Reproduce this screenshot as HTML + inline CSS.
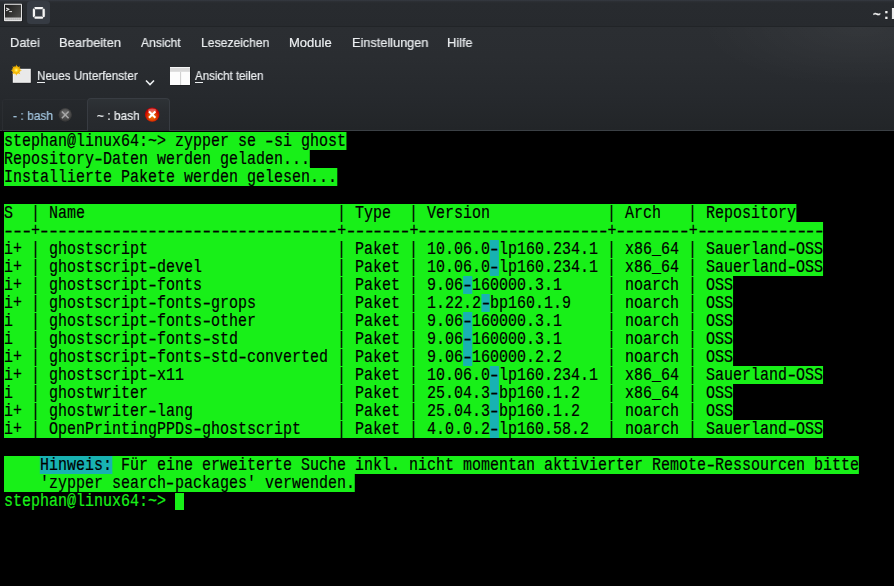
<!DOCTYPE html>
<html><head><meta charset="utf-8">
<style>
html,body{margin:0;padding:0;}
body{width:894px;height:586px;overflow:hidden;position:relative;background:#000;font-family:"Liberation Sans",sans-serif;}
.abs{position:absolute;}
#title{left:0;top:0;width:894px;height:26px;background:linear-gradient(#363a42 0px,#2c2f34 1.5px,#282b2f 3px,#272a2e 26px);}
#tline{left:0;top:26px;width:894px;height:1px;background:#212427;}
#menu{left:0;top:27px;width:894px;height:103px;background:radial-gradient(ellipse 160px 60px at 860px 0px,rgba(255,255,255,0.045),rgba(255,255,255,0) 100%),linear-gradient(#2b2e32 0px,#2a2d31 30px,#26292d 70px,#222528 103px);}
#bline{left:0;top:130px;width:894px;height:1px;background:#3b4045;}
.m{position:absolute;transform-origin:0 0;top:35px;font-size:13px;color:#eceff1;white-space:nowrap;line-height:15px;}
.tb{position:absolute;transform-origin:0 0;top:68px;font-size:13px;color:#eceff1;white-space:nowrap;line-height:15px;}
#term{left:0;top:131px;width:894px;height:455px;background:#000;}
.r{position:absolute;left:4px;height:18px;line-height:18px;font-family:"Liberation Mono",monospace;font-size:18px;transform:scaleX(0.83321);transform-origin:0 0;white-space:pre;color:#000;-webkit-text-stroke:0.2px currentColor;}
.g{background:#18f018;display:inline-block;height:18px;vertical-align:top;overflow:hidden;}
.c{background:#18b2b2;display:inline-block;height:18px;vertical-align:top;}
.p{color:#18f018;}
.h{font-style:normal;display:inline-block;transform:scaleX(1.4) translateY(0.5px);}
.tt,.m,.tb{will-change:transform;-webkit-text-stroke:0.2px currentColor;}
.u{position:absolute;height:1px;background:#eceff1;}
</style></head><body>
<div id="title" class="abs"></div>
<div id="tline" class="abs"></div>
<div id="menu" class="abs"></div>
<div id="bline" class="abs"></div>
<!-- terminal icon -->
<svg class="abs" style="left:0;top:0" width="26" height="26" viewBox="0 0 26 26">
<defs><linearGradient id="scr" x1="0" y1="0" x2="1" y2="0.6"><stop offset="0" stop-color="#1c1c1c"/><stop offset="1" stop-color="#454543"/></linearGradient></defs>
<rect x="3.6" y="3.9" width="19" height="18" rx="1" fill="#000" opacity="0.5"/>
<rect x="4" y="3.7" width="18" height="17.5" rx="0.8" fill="#e4e4e4"/>
<rect x="5" y="4.8" width="16" height="12.8" fill="url(#scr)"/>
<rect x="5" y="18.3" width="16" height="1.6" fill="#c4c4c4"/>
<path d="M5.3 19.1 h15.4" stroke="#8c8c8c" stroke-width="0.6" stroke-dasharray="1 1"/>
<path d="M6.2 8 L8.8 9.35 L6.2 10.7" stroke="#e6e6e6" stroke-width="1.1" fill="none"/>
<rect x="9.2" y="11.1" width="2.8" height="1" fill="#e6e6e6"/>
</svg>
<!-- keep above button -->
<div class="abs" style="left:26.5px;top:1px;width:23px;height:23px;border-radius:3.5px;background:#363b43"></div>
<svg class="abs" style="left:0;top:0" width="60" height="26" viewBox="0 0 60 26">
<path d="M35.6 17.6 L43 17.6 L45.3 15.3 L45.3 10 L43 17.6 Z" fill="#8a8d90" opacity="0.5"/>
<path fill-rule="evenodd" fill="#f6f6f6" d="M35 7 L42.5 7 L44.8 9.3 L44.8 16.5 L42.5 18.8 L35 18.8 L32.8 16.5 L32.8 9.3 Z M35.1 9.3 L35.1 16.5 L42.5 16.5 L42.5 9.3 Z"/>
<path d="M33.6 7.9 L35.1 9.3 M43.8 7.9 L42.5 9.3 M43.8 17.8 L42.5 16.5 M33.6 17.8 L35.1 16.5" stroke="#363b43" stroke-width="0.8"/>
</svg>
<div class="abs tt" style="left:873px;top:7.2px;font-size:13px;font-weight:bold;color:#eeeeee;line-height:15px">~</div>
<div class="abs tt" style="left:884px;top:7.2px;font-size:14px;font-weight:bold;color:#eeeeee;line-height:15px">:</div>
<div class="abs tt" style="left:891px;top:6.3px;font-size:15px;font-weight:bold;color:#eeeeee;line-height:15px">b</div>
<div class="m" style="left:9.6px;transform:scaleX(0.983)">Datei</div>
<div class="m" style="left:59.1px;transform:scaleX(0.985)">Bearbeiten</div>
<div class="m" style="left:141.2px;transform:scaleX(0.93)">Ansicht</div>
<div class="m" style="left:200.7px;transform:scaleX(0.937)">Lesezeichen</div>
<div class="m" style="left:288.7px;transform:scaleX(1.0)">Module</div>
<div class="m" style="left:351.8px;transform:scaleX(0.979)">Einstellungen</div>
<div class="m" style="left:447.4px;transform:scaleX(0.98)">Hilfe</div>
<!-- new tab icon -->
<svg class="abs" style="left:0;top:56px" width="36" height="34" viewBox="0 56 36 34">
<defs><radialGradient id="sun" cx="0.5" cy="0.5" r="0.5"><stop offset="0" stop-color="#fff4b0"/><stop offset="0.45" stop-color="#ffd820"/><stop offset="1" stop-color="#f0a800"/></radialGradient></defs>
<rect x="13.2" y="69.3" width="18" height="14" fill="#000" opacity="0.4"/>
<rect x="12.8" y="68.8" width="18" height="14" fill="#f4f4f4"/>
<rect x="13.8" y="69.8" width="16" height="12" fill="#e9e9e9"/>
<g transform="translate(16.3,70.2)">
<polygon points="0,-5.6 1.1,-2.7 3.96,-3.96 2.7,-1.1 5.6,0 2.7,1.1 3.96,3.96 1.1,2.7 0,5.6 -1.1,2.7 -3.96,3.96 -2.7,1.1 -5.6,0 -2.7,-1.1 -3.96,-3.96 -1.1,-2.7" fill="#f5b400"/>
<polygon points="0,-5.6 1.1,-2.7 3.96,-3.96 2.7,-1.1 5.6,0 2.7,1.1 3.96,3.96 1.1,2.7 0,5.6 -1.1,2.7 -3.96,3.96 -2.7,1.1 -5.6,0 -2.7,-1.1 -3.96,-3.96 -1.1,-2.7" fill="#ffd000" transform="rotate(22.5) scale(0.85)"/>
<circle r="3.2" fill="url(#sun)"/>
</g>
</svg>
<div class="tb" style="left:36.9px;transform:scaleX(0.893)">Neues Unterfenster</div>
<div class="u" style="left:37px;top:82px;width:8px"></div>
<svg class="abs" style="left:144px;top:78px" width="12" height="10" viewBox="0 0 12 10">
<path d="M2 2.5 L6 6.5 L10 2.5" stroke="#eceff1" stroke-width="1.6" fill="none"/>
</svg>
<!-- split view icon -->
<svg class="abs" style="left:168px;top:65px" width="24" height="22" viewBox="0 0 24 22">
<rect x="2.5" y="2.5" width="20" height="18" fill="#000" opacity="0.4"/>
<rect x="2" y="2" width="20" height="18" fill="#fdfdfd"/>
<rect x="2" y="2.8" width="20" height="4" fill="#d9d9d9"/>
<rect x="12.2" y="6.8" width="0.9" height="13.2" fill="#c8c8c8"/>
</svg>
<div class="tb" style="left:194.6px;transform:scaleX(0.886)">Ansicht teilen</div>
<div class="u" style="left:195px;top:82px;width:8px"></div>
<!-- tabs -->
<div class="abs" style="left:2px;top:99px;width:86px;height:32px;border:1px solid #2a2d31;border-bottom:none;border-right:none;border-radius:3px 3px 0 0;box-sizing:border-box;"></div>
<div class="abs" style="left:87px;top:98px;width:83px;height:33px;border:1px solid #383c42;border-bottom:none;border-radius:4px 4px 0 0;box-sizing:border-box;background:linear-gradient(#2e3236,#292c30 40%,#26292d)"></div>
<div class="abs tt" style="left:13px;top:108px;font-size:13px;color:#a3c6e0;white-space:nowrap;line-height:15px;transform:scaleX(0.925);transform-origin:0 0">- : bash</div>
<div class="abs tt" style="left:97px;top:108px;font-size:13px;color:#eceff1;white-space:nowrap;line-height:15px;transform:scaleX(0.915);transform-origin:0 0">~ : bash</div>
<svg class="abs" style="left:57px;top:107px" width="16" height="16" viewBox="0 0 16 16">
<defs><radialGradient id="gc" cx="0.5" cy="0.35" r="0.6"><stop offset="0" stop-color="#6a6a6a"/><stop offset="1" stop-color="#3e3e3e"/></radialGradient></defs>
<circle cx="8.2" cy="7.8" r="6.6" fill="url(#gc)"/><circle cx="8.2" cy="7.8" r="6.2" fill="none" stroke="#333" stroke-width="0.8" opacity="0.6"/>
<path d="M4.9 4.5 L11.6 11.2 M11.6 4.5 L4.9 11.2" stroke="#a8a8a8" stroke-width="1.6"/>
</svg>
<svg class="abs" style="left:144px;top:107px" width="16" height="16" viewBox="0 0 16 16">
<defs><radialGradient id="rc" cx="0.5" cy="0.62" r="0.55"><stop offset="0" stop-color="#ee7a00"/><stop offset="0.45" stop-color="#e05000"/><stop offset="0.75" stop-color="#d41400"/><stop offset="1" stop-color="#b80000"/></radialGradient></defs>
<circle cx="8.2" cy="7.6" r="7.2" fill="url(#rc)"/>
<ellipse cx="8.2" cy="3.8" rx="4.2" ry="2.2" fill="#ffb0b0" opacity="0.45"/>
<path d="M5 4.4 L11.4 10.8 M11.4 4.4 L5 10.8" stroke="#ffffff" stroke-width="2.1"/>
</svg>
<div id="term" class="abs"></div>
<div class="r" style="top:132px"><span class="g">stephan@linux64:~&gt; zypper se <i class="h">-</i>si ghost</span></div>
<div class="r" style="top:150px"><span class="g">Repository<i class="h">-</i>Daten werden geladen...</span></div>
<div class="r" style="top:168px"><span class="g">Installierte Pakete werden gelesen...</span></div>
<div class="r" style="top:204px"><span class="g">S  | Name                            | Type  | Version             | Arch   | Repository</span></div>
<div class="r" style="top:222px"><span class="g" style="width:982.97px;white-space:nowrap"><i class="h">-</i><i class="h">-</i><i class="h">-</i>+<i class="h">-</i><i class="h">-</i><i class="h">-</i><i class="h">-</i><i class="h">-</i><i class="h">-</i><i class="h">-</i><i class="h">-</i><i class="h">-</i><i class="h">-</i><i class="h">-</i><i class="h">-</i><i class="h">-</i><i class="h">-</i><i class="h">-</i><i class="h">-</i><i class="h">-</i><i class="h">-</i><i class="h">-</i><i class="h">-</i><i class="h">-</i><i class="h">-</i><i class="h">-</i><i class="h">-</i><i class="h">-</i><i class="h">-</i><i class="h">-</i><i class="h">-</i><i class="h">-</i><i class="h">-</i><i class="h">-</i><i class="h">-</i><i class="h">-</i>+<i class="h">-</i><i class="h">-</i><i class="h">-</i><i class="h">-</i><i class="h">-</i><i class="h">-</i><i class="h">-</i>+<i class="h">-</i><i class="h">-</i><i class="h">-</i><i class="h">-</i><i class="h">-</i><i class="h">-</i><i class="h">-</i><i class="h">-</i><i class="h">-</i><i class="h">-</i><i class="h">-</i><i class="h">-</i><i class="h">-</i><i class="h">-</i><i class="h">-</i><i class="h">-</i><i class="h">-</i><i class="h">-</i><i class="h">-</i><i class="h">-</i><i class="h">-</i>+<i class="h">-</i><i class="h">-</i><i class="h">-</i><i class="h">-</i><i class="h">-</i><i class="h">-</i><i class="h">-</i><i class="h">-</i>+<i class="h">-</i><i class="h">-</i><i class="h">-</i><i class="h">-</i><i class="h">-</i><i class="h">-</i><i class="h">-</i><i class="h">-</i><i class="h">-</i><i class="h">-</i><i class="h">-</i><i class="h">-</i><i class="h">-</i><i class="h">-</i></span></div>
<div class="r" style="top:240px"><span class="g">i+ | ghostscript                     | Paket | 10.06.0<span class="c"><i class="h">-</i></span>lp160.234.1 | x86_64 | Sauerland<i class="h">-</i>OSS</span></div>
<div class="r" style="top:258px"><span class="g">i+ | ghostscript<i class="h">-</i>devel               | Paket | 10.06.0<span class="c"><i class="h">-</i></span>lp160.234.1 | x86_64 | Sauerland<i class="h">-</i>OSS</span></div>
<div class="r" style="top:276px"><span class="g">i+ | ghostscript<i class="h">-</i>fonts               | Paket | 9.06<span class="c"><i class="h">-</i></span>160000.3.1     | noarch | OSS</span></div>
<div class="r" style="top:294px"><span class="g">i+ | ghostscript<i class="h">-</i>fonts<i class="h">-</i>grops         | Paket | 1.22.2<span class="c"><i class="h">-</i></span>bp160.1.9    | noarch | OSS</span></div>
<div class="r" style="top:312px"><span class="g">i  | ghostscript<i class="h">-</i>fonts<i class="h">-</i>other         | Paket | 9.06<span class="c"><i class="h">-</i></span>160000.3.1     | noarch | OSS</span></div>
<div class="r" style="top:330px"><span class="g">i  | ghostscript<i class="h">-</i>fonts<i class="h">-</i>std           | Paket | 9.06<span class="c"><i class="h">-</i></span>160000.3.1     | noarch | OSS</span></div>
<div class="r" style="top:348px"><span class="g">i+ | ghostscript<i class="h">-</i>fonts<i class="h">-</i>std<i class="h">-</i>converted | Paket | 9.06<span class="c"><i class="h">-</i></span>160000.2.2     | noarch | OSS</span></div>
<div class="r" style="top:366px"><span class="g">i+ | ghostscript<i class="h">-</i>x11                 | Paket | 10.06.0<span class="c"><i class="h">-</i></span>lp160.234.1 | x86_64 | Sauerland<i class="h">-</i>OSS</span></div>
<div class="r" style="top:384px"><span class="g">i  | ghostwriter                     | Paket | 25.04.3<span class="c"><i class="h">-</i></span>bp160.1.2   | x86_64 | OSS</span></div>
<div class="r" style="top:402px"><span class="g">i+ | ghostwriter<i class="h">-</i>lang                | Paket | 25.04.3<span class="c"><i class="h">-</i></span>bp160.1.2   | noarch | OSS</span></div>
<div class="r" style="top:420px"><span class="g">i+ | OpenPrintingPPDs<i class="h">-</i>ghostscript    | Paket | 4.0.0.2<span class="c"><i class="h">-</i></span>lp160.58.2  | noarch | Sauerland<i class="h">-</i>OSS</span></div>
<div class="r" style="top:438px"></div>
<div class="r" style="top:456px"><span class="g">    <span class="c">Hinweis:</span> Für eine erweiterte Suche inkl. nicht momentan aktivierter Remote<i class="h">-</i>Ressourcen bitte</span></div>
<div class="r" style="top:474px"><span class="g">    'zypper search<i class="h">-</i>packages' verwenden.</span></div>
<div class="r" style="top:492px"><span class="p">stephan@linux64:~&gt; </span></div>
<div class="abs" style="left:175px;top:493px;width:9px;height:17px;background:#18f018"></div>
</body></html>
